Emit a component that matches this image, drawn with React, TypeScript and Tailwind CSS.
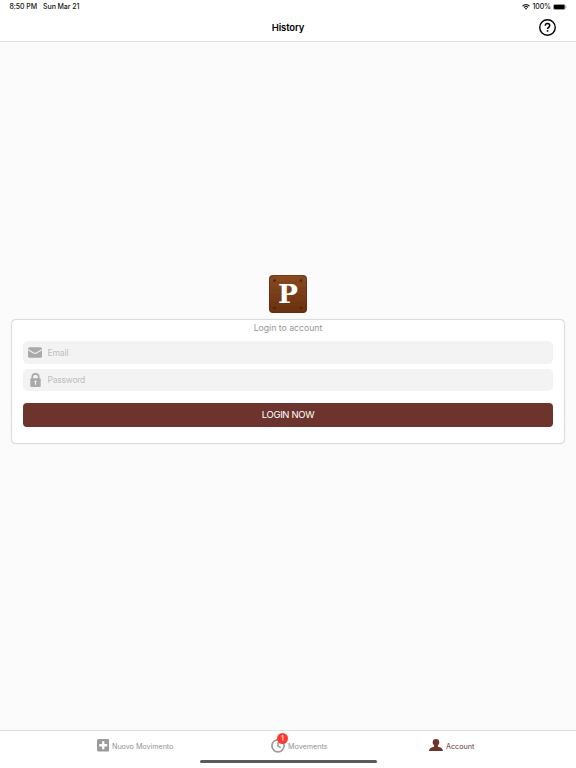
import { useState } from "react";

function StatusBar() {
  return (
    <div className="flex h-[14px] items-center justify-between pl-[9.5px] pr-[9px] text-[7px] font-medium leading-[14px] tracking-[-0.08px] text-[#111]">
      <div className="flex gap-[6px]">
        <span>8:50 PM</span>
        <span>Sun Mar 21</span>
      </div>
      <div className="flex items-center gap-[2px]">
        <svg width="8" height="6" viewBox="0 0 16 12" fill="none" stroke="#111" strokeWidth="2.2">
          <path d="M1 4.2a10 10 0 0 1 14 0" />
          <path d="M3.8 7a6 6 0 0 1 8.4 0" />
          <path d="M5.6 9 8 11.6 10.4 9a3.4 3.4 0 0 0-4.8 0z" fill="#111" stroke="none" />
        </svg>
        <span>100%</span>
        <svg width="14" height="6" viewBox="0 0 14 6">
          <rect x="0.25" y="0.25" width="12" height="5.5" rx="1.6" fill="#fff" stroke="#777" strokeWidth="0.5" />
          <rect x="0.8" y="0.8" width="10.9" height="4.4" rx="1.1" fill="#000" />
          <path d="M12.9 2v2c.8-.3.8-1.7 0-2z" fill="#777" />
        </svg>
      </div>
    </div>
  );
}

function Header() {
  return (
    <header className="h-[42px] shrink-0 border-b border-[#dedede] bg-white">
      <StatusBar />
      <div className="grid h-[28px] grid-cols-3 items-center pr-[20px] pl-[20px]">
        <span />
        <h1 className="pt-[1px] text-center text-[9.5px] font-semibold tracking-[-0.15px] text-black">
          History
        </h1>
        <button className="-mt-[1px] justify-self-end" aria-label="Help">
          <svg className="block" width="17" height="17" viewBox="0 0 17 17" fill="none" stroke="#000">
            <circle cx="8.5" cy="8.5" r="7.75" strokeWidth="1.4" />
            <path d="M6.3 6.8c0-1.4.9-2.2 2.2-2.2s2.2.8 2.2 2c0 1.7-2.1 1.7-2.1 3.4" strokeWidth="1.5" />
            <path d="M8.55 11.1v1.6" strokeWidth="1.6" />
          </svg>
        </button>
      </div>
    </header>
  );
}

function Logo() {
  return (
    <div className="relative flex h-[38px] w-[38px] items-center justify-center overflow-hidden rounded-[4px] bg-linear-to-b from-[#8a4b20] to-[#69310f]">
      <svg className="absolute inset-0" width="38" height="38" viewBox="0 0 38 38" fill="none">
        <path
          d="M0 8q19-3 38 0M0 14q19 3 38-1M0 21q19-4 38 1M0 27q19 3 38 0M0 33q19-3 38 0"
          stroke="#572609"
          strokeWidth="0.6"
          opacity="0.2"
        />
        <rect x="0.5" y="0.5" width="37" height="37" rx="3.8" stroke="#572a10" opacity="0.5" />
        <g fill="#4a230d">
          <circle cx="5.5" cy="5.5" r="1.3" />
          <circle cx="32" cy="5.5" r="1.3" />
          <circle cx="5.5" cy="33" r="1.3" />
          <circle cx="32" cy="33" r="1.3" />
        </g>
      </svg>
      <span className="relative font-['DejaVu_Serif',serif] text-[26.5px] font-bold leading-[38px] text-white">
        P
      </span>
    </div>
  );
}

function MailIcon() {
  return (
    <svg width="14" height="11" viewBox="0 0 14 11">
      <rect y="0.3" width="14" height="10.5" rx="1.6" fill="#a9a9a9" />
      <path d="M0 2.6 5.6 6q1.4.8 2.8 0L14 2.6" fill="none" stroke="#f3f3f3" strokeWidth="1.1" />
    </svg>
  );
}

function LockIcon() {
  return (
    <svg width="11" height="14" viewBox="0 0 11 14">
      <path d="M2.3 7V4a3.2 3.2 0 0 1 6.4 0v3" fill="none" stroke="#a9a9a9" strokeWidth="1.7" />
      <rect x="0.3" y="5.3" width="10.4" height="8.6" rx="1" fill="#a9a9a9" />
      <circle cx="5.5" cy="8.6" r="1.1" fill="#f3f3f3" />
      <path d="M5.5 8.6v3.2" stroke="#f3f3f3" strokeWidth="1.1" />
    </svg>
  );
}

function LoginCard() {
  const [email, setEmail] = useState("");
  const [password, setPassword] = useState("");

  return (
    <form
      className="flex h-[125px] w-[554px] flex-col rounded-[5px] border border-[#dcdcdc] bg-white px-[11px] shadow-[0_0_1px_#d5d5d5]"
      onSubmit={(e) => e.preventDefault()}
    >
      <p className="h-[21px] pt-[2px] text-center text-[8.7px] leading-[13px] text-[#969696]">
        Login to account
      </p>
      <label className="flex h-[23px] items-center rounded-[5px] bg-[#f3f3f3]">
        <span className="flex w-[24.5px] justify-center">
          <MailIcon />
        </span>
        <input
          className="flex-1 bg-transparent pt-[1px] text-[8.5px] tracking-[-0.12px] outline-none placeholder:text-[#bdbdbd]"
          type="email"
          placeholder="Email"
          value={email}
          onChange={(e) => setEmail(e.target.value)}
        />
      </label>
      <label className="mt-[5px] flex h-[22px] items-center rounded-[5px] bg-[#f3f3f3]">
        <span className="flex w-[24.5px] justify-center">
          <LockIcon />
        </span>
        <input
          className="flex-1 bg-transparent pt-[1px] text-[8.5px] tracking-[-0.22px] outline-none placeholder:text-[#bdbdbd]"
          type="password"
          placeholder="Password"
          value={password}
          onChange={(e) => setPassword(e.target.value)}
        />
      </label>
      <button className="mt-[11.5px] h-[24.5px] rounded-[4px] bg-[#6c342d] text-[9.5px] tracking-[-0.35px] text-white">
        LOGIN NOW
      </button>
    </form>
  );
}

function TabBar() {
  return (
    <nav className="h-[38px] shrink-0 border-t border-[#dedede] bg-white text-[7.2px] text-[#929292]">
      <div className="flex h-[29px] items-center pl-[96.5px]">
        <button className="flex w-[174.5px] items-center gap-[3px]">
          <svg width="12.5" height="12.5" viewBox="0 0 12.5 12.5">
            <rect width="12.5" height="12.5" rx="1.6" fill="#9b9b9b" />
            <path d="M6.25 2.3v7.9M2.3 6.25h7.9" stroke="#fff" strokeWidth="2.3" />
          </svg>
          <span className="pt-[3px] tracking-[-0.03px]">Nuovo Movimento</span>
        </button>
        <button className="flex w-[158px] items-center gap-[3px]">
          <span className="relative">
            <svg className="block" width="14" height="14" viewBox="0 0 14 14" fill="none" stroke="#9b9b9b">
              <circle cx="7" cy="6.8" r="6.1" strokeWidth="1.7" />
              <path d="M7 3v4.1l2.7 1.5" strokeWidth="1.5" />
            </svg>
            <span className="absolute -top-[6px] left-[6px] h-[11px] w-[11px] rounded-full bg-[#fb3b30] text-center text-[7px] leading-[11px] text-white">
              1
            </span>
          </span>
          <span className="pt-[3px]">Movements</span>
        </button>
        <button className="flex items-center gap-[3px] text-[#6c342d]">
          <svg className="-mt-[1px]" width="14" height="12" viewBox="0 0 14 12" fill="currentColor">
            <path d="M7 0C4.7 0 3.7 1.3 3.9 3.1c-.6.2-.3 1.5.3 1.8.2.8.5 1.3.9 1.7v1C4.8 8.3.3 8.2 0 12h14c-.3-3.8-4.8-3.7-5.1-4.4v-1c.4-.4.7-.9.9-1.7.6-.3.9-1.6.3-1.8C10.3 1.3 9.3 0 7 0z" />
          </svg>
          <span className="pt-[3px]">Account</span>
        </button>
      </div>
      <div className="mx-auto h-[3px] w-[177px] rounded-full bg-[#5b5b5b]" />
    </nav>
  );
}

export default function App() {
  return (
    <div className="flex h-[768px] w-[576px] flex-col overflow-hidden bg-[#fbfbfb] font-['Inter','Liberation_Sans',sans-serif]">
      <Header />
      <main className="flex flex-1 flex-col items-center pt-[233px]">
        <Logo />
        <div className="mt-[6px]">
          <LoginCard />
        </div>
      </main>
      <TabBar />
    </div>
  );
}
